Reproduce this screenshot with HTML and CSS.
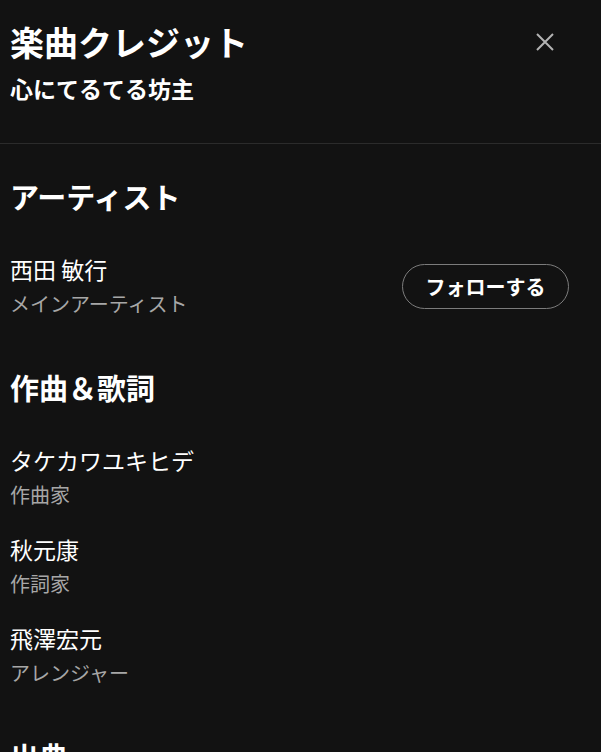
FILE: index.html
```html
<!DOCTYPE html>
<html lang="ja">
<head>
<meta charset="utf-8">
<link rel="stylesheet" href="styles.css">
</head>
<body>
<div class="dialog">
  <header class="header">
    <div class="title-row">
      <h1 class="title">楽曲クレジット</h1>
      <button class="close" aria-label="閉じる">
        <svg width="18" height="18" viewBox="0 0 18 18"><path d="M1 1 L17 17 M17 1 L1 17" stroke="#b3b3b3" stroke-width="2" fill="none"/></svg>
      </button>
    </div>
    <div class="subtitle">心にてるてる坊主</div>
  </header>
  <section class="section">
    <h2 class="heading">アーティスト</h2>
    <div class="entries">
      <div class="entry entry-row">
        <div class="info">
          <div class="name">西田 敏行</div>
          <div class="role">メインアーティスト</div>
        </div>
        <button class="follow">フォローする</button>
      </div>
    </div>
  </section>
  <section class="section">
    <h2 class="heading">作曲＆歌詞</h2>
    <div class="entries">
      <div class="entry">
        <div class="name">タケカワユキヒデ</div>
        <div class="role">作曲家</div>
      </div>
      <div class="entry">
        <div class="name">秋元康</div>
        <div class="role">作詞家</div>
      </div>
      <div class="entry">
        <div class="name">飛澤宏元</div>
        <div class="role">アレンジャー</div>
      </div>
    </div>
  </section>
  <section class="section">
    <h2 class="heading">出典</h2>
  </section>
</div>
</body>
</html>
```

FILE: styles.css
```css
html, body {
  margin: 0;
  padding: 0;
  background: #121212;
  height: 100%;
  overflow: hidden;
}
body {
  color: #ffffff;
  font-family: "Noto Sans CJK JP", "Noto Sans", sans-serif;
}
.dialog {
  display: flex;
  flex-direction: column;
}
.header {
  padding: 22px 0 40px 10px;
  border-bottom: 1px solid #2b2b2b;
}
.title-row {
  display: flex;
  align-items: center;
  justify-content: space-between;
}
.title {
  margin: 0;
  font-size: 34px;
  line-height: 40px;
  font-weight: 700;
}
.close {
  width: 32px;
  height: 32px;
  margin-right: 40px;
  padding: 0;
  border: none;
  background: transparent;
  display: flex;
  align-items: center;
  justify-content: center;
}
.subtitle {
  margin-top: 11px;
  font-size: 23px;
  line-height: 30px;
  font-weight: 700;
}
.section {
  padding: 0 10px;
  margin-top: 34px;
}
.section + .section {
  margin-top: 50px;
}
.heading {
  margin: 0 0 40px;
  font-size: 29px;
  line-height: 36px;
  font-weight: 700;
}
.entries {
  display: flex;
  flex-direction: column;
  gap: 24px;
}
.entry-row {
  display: flex;
  align-items: center;
  justify-content: space-between;
}
.name {
  font-size: 23px;
  line-height: 30px;
  color: #ffffff;
}
.role {
  margin-top: 5px;
  font-size: 20px;
  line-height: 30px;
  color: #a7a7a7;
}
.follow {
  height: 45px;
  width: 167px;
  margin-right: 22px;
  border: 1px solid #7c7c7c;
  border-radius: 999px;
  background: transparent;
  color: #ffffff;
  font-family: "Noto Sans CJK JP", "Noto Sans", sans-serif;
  font-size: 20px;
  font-weight: 700;
  padding: 0;
}
```
